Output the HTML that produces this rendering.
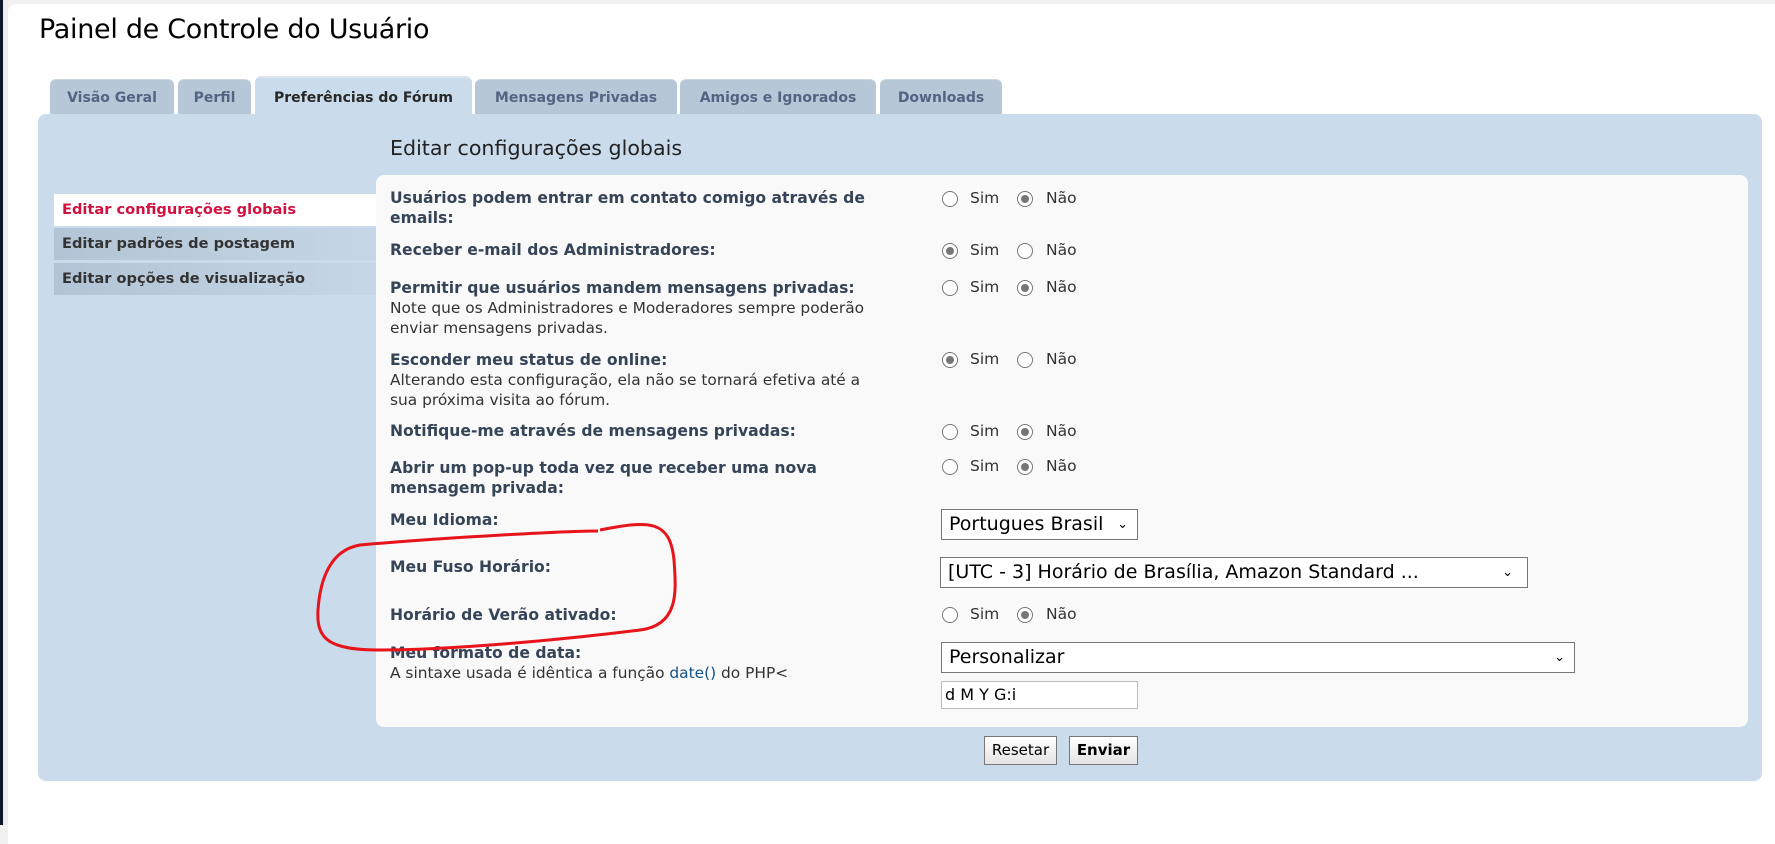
<!DOCTYPE html>
<html><head><meta charset="utf-8"><style>
*{box-sizing:border-box;margin:0;padding:0}
body{width:1775px;height:825px;background:#f1f1f1;position:relative;overflow:hidden;font-family:"DejaVu Sans",Verdana,sans-serif;color:#333}
.page{position:absolute;left:8px;top:4px;width:1790px;height:840px;background:#fff;border-radius:8px 0 0 0}
.lb{position:absolute;left:0;top:0;width:3px;height:825px;background:#101830}
.lb2{position:absolute;left:3px;top:0;width:5px;height:825px;background:#eeeeee}
.abs{position:absolute}
h1{position:absolute;left:39px;top:14px;font-family:"DejaVu Sans",sans-serif;font-weight:normal;font-size:27px;color:#000;letter-spacing:-0.3px}
.tab{position:absolute;top:79px;height:36px;background:#b6c8d8;border-radius:6px 6px 0 0;font-size:14px;font-weight:bold;color:#536482;text-align:center;line-height:36px;border-top:1px solid #c9d6e2}
.tab.act{top:76px;height:39px;background:#cadceb;color:#282828;line-height:40px;border-top:2px solid #dbe6f0}
.panel{position:absolute;left:38px;top:114px;width:1724px;height:667px;background:#cadceb;border-radius:8px}
.h2{position:absolute;left:390px;top:136px;font-size:20.6px;color:#222}
.box{position:absolute;left:376px;top:175px;width:1372px;height:552px;background:#f9f9f9;border-radius:8px}
.mi{position:absolute;left:54px;width:322px;height:32px;font-size:14.6px;font-weight:bold;color:#333;padding-left:8px;line-height:32px;background:linear-gradient(to right,#b2c4d5,#c6d6e6)}
.lab{position:absolute;left:390px;font-size:15.6px;font-weight:bold;color:#364458;line-height:20px;white-space:nowrap}
.lab span{font-weight:normal;color:#333;font-size:15.4px}
.r{position:absolute;width:16px;height:16px;border:1.5px solid #767676;border-radius:50%;background:#fff}
.r.on::after{content:"";position:absolute;left:2.5px;top:2.5px;width:8px;height:8px;border-radius:50%;background:#767676}
.rt{position:absolute;font-size:15.5px;color:#333}
.sel{position:absolute;border:1px solid #767676;background:#fff;font-size:19px;color:#000;padding-left:7px;line-height:29px}
.sel i{position:absolute;right:9px;top:0;font-style:normal;font-size:13px}
.btn{position:absolute;top:736px;height:29px;border:1px solid #777;background:linear-gradient(#fff,#e4e4e4);font-size:15px;text-align:center;line-height:27px;color:#000}
</style></head><body>
<div class="page"></div><div class="lb"></div><div class="lb2"></div>
<h1>Painel de Controle do Usuário</h1>
<div class="tab" style="left:50px;width:124px">Visão Geral</div>
<div class="tab" style="left:178px;width:73px">Perfil</div>
<div class="tab" style="left:475px;width:202px">Mensagens Privadas</div>
<div class="tab" style="left:680px;width:196px">Amigos e Ignorados</div>
<div class="tab" style="left:880px;width:122px">Downloads</div>
<div class="panel"></div>
<div class="tab act" style="left:255px;width:217px">Preferências do Fórum</div>
<div class="h2">Editar configurações globais</div>
<div class="box"></div>
<div class="mi" style="top:194px;background:#fff;color:#d31141">Editar configurações globais</div>
<div class="mi" style="top:228px">Editar padrões de postagem</div>
<div class="mi" style="top:263px">Editar opções de visualização</div>

<div class="lab" style="top:188px">Usuários podem entrar em contato comigo através de<br>emails:</div>
<div class="lab" style="top:240px">Receber e-mail dos Administradores:</div>
<div class="lab" style="top:278px">Permitir que usuários mandem mensagens privadas:<br><span>Note que os Administradores e Moderadores sempre poderão<br>enviar mensagens privadas.</span></div>
<div class="lab" style="top:350px">Esconder meu status de online:<br><span>Alterando esta configuração, ela não se tornará efetiva até a<br>sua próxima visita ao fórum.</span></div>
<div class="lab" style="top:421px">Notifique-me através de mensagens privadas:</div>
<div class="lab" style="top:458px">Abrir um pop-up toda vez que receber uma nova<br>mensagem privada:</div>
<div class="lab" style="top:510px">Meu Idioma:</div>
<div class="lab" style="top:557px">Meu Fuso Horário:</div>
<div class="lab" style="top:605px">Horário de Verão ativado:</div>
<div class="lab" style="top:643px">Meu formato de data:<br><span>A sintaxe usada é idêntica a função <span style="color:#105289">date()</span> do PHP&lt;</span></div>

<div class="r" style="left:942px;top:191px"></div><div class="rt" style="left:970px;top:189px">Sim</div><div class="r on" style="left:1017px;top:191px"></div><div class="rt" style="left:1046px;top:189px">Não</div>
<div class="r on" style="left:942px;top:243px"></div><div class="rt" style="left:970px;top:241px">Sim</div><div class="r" style="left:1017px;top:243px"></div><div class="rt" style="left:1046px;top:241px">Não</div>
<div class="r" style="left:942px;top:280px"></div><div class="rt" style="left:970px;top:278px">Sim</div><div class="r on" style="left:1017px;top:280px"></div><div class="rt" style="left:1046px;top:278px">Não</div>
<div class="r on" style="left:942px;top:352px"></div><div class="rt" style="left:970px;top:350px">Sim</div><div class="r" style="left:1017px;top:352px"></div><div class="rt" style="left:1046px;top:350px">Não</div>
<div class="r" style="left:942px;top:424px"></div><div class="rt" style="left:970px;top:422px">Sim</div><div class="r on" style="left:1017px;top:424px"></div><div class="rt" style="left:1046px;top:422px">Não</div>
<div class="r" style="left:942px;top:459px"></div><div class="rt" style="left:970px;top:457px">Sim</div><div class="r on" style="left:1017px;top:459px"></div><div class="rt" style="left:1046px;top:457px">Não</div>
<div class="r" style="left:942px;top:607px"></div><div class="rt" style="left:970px;top:605px">Sim</div><div class="r on" style="left:1017px;top:607px"></div><div class="rt" style="left:1046px;top:605px">Não</div>

<div class="sel" style="left:941px;top:509px;width:197px;height:31px">Portugues Brasil<i>&#8964;</i></div>
<div class="sel" style="left:940px;top:557px;width:588px;height:31px">[UTC - 3] Horário de Brasília, Amazon Standard ...<i style="right:14px">&#8964;</i></div>
<div class="sel" style="left:941px;top:642px;width:634px;height:31px">Personalizar<i>&#8964;</i></div>
<div class="sel" style="left:941px;top:681px;width:197px;height:28px;border-color:#bbb;font-size:16px;line-height:26px;padding-left:3px">d M Y G:i</div>

<div class="btn" style="left:984px;width:73px">Resetar</div>
<div class="btn" style="left:1069px;width:69px;font-weight:bold">Enviar</div>

<svg class="abs" style="left:0;top:0" width="1775" height="825"><path d="M598 531 C570 531 450 537 360 545 C330 550 320 580 318 610 C316 640 330 650 380 650 C450 650 560 640 640 630 C680 625 676 590 674 560 C670 520 650 520 600 530" fill="none" stroke="#e8141c" stroke-width="3"/></svg>
</body></html>
